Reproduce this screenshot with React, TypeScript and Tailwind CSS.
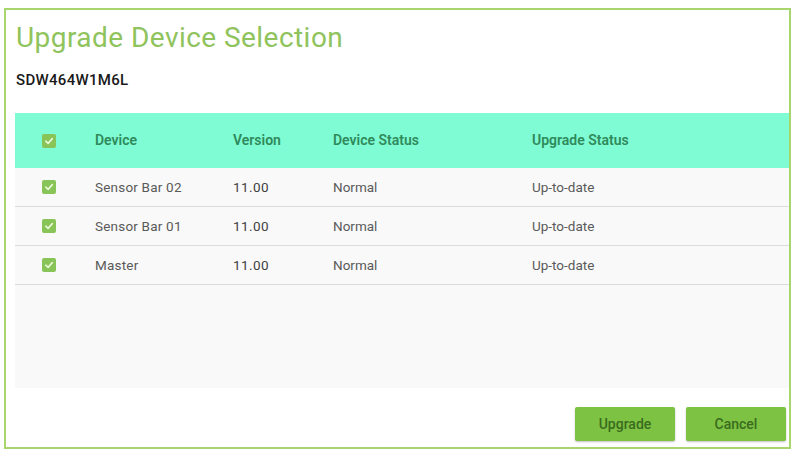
import React from "react";

type Row = { device: string; version: string; status: string; upgrade: string };

const rows: Row[] = [
  { device: "Sensor Bar 02", version: "11.00", status: "Normal", upgrade: "Up-to-date" },
  { device: "Sensor Bar 01", version: "11.00", status: "Normal", upgrade: "Up-to-date" },
  { device: "Master", version: "11.00", status: "Normal", upgrade: "Up-to-date" },
];

function Check() {
  return (
    <span className="flex h-[14px] w-[14px] items-center justify-center rounded-[2px] bg-[#88c457]">
      <svg width="10" height="10" viewBox="0 0 10 10" fill="none">
        <path d="M1.8 5.2 L4.1 7.4 L8.3 2.6" stroke="#eaf7d8" strokeWidth="1.6" strokeLinecap="round" strokeLinejoin="round" />
      </svg>
    </span>
  );
}

const cols = "grid grid-cols-[80px_138px_100px_199px_1fr] items-center";

export default function App() {
  return (
    <div
      className="h-[450px] w-[793px] bg-white pl-[4px] pt-[8px]"
      style={{ fontFamily: "Roboto, 'Liberation Sans', sans-serif" }}
    >
      <div className="flex h-[441px] w-[787px] flex-col border-2 border-[#a8d56d] bg-white">
        <h1 className="pl-[10px] pt-[11px] text-[28px] leading-[33px] font-normal tracking-[0.45px] text-[#8fc35c]">
          Upgrade Device Selection
        </h1>
        <div className="mt-[16px] pl-[10px] text-[15px] leading-[20px] font-medium tracking-[0.3px] text-[#1a1a1a]">
          SDW464W1M6L
        </div>

        <div className="ml-[9px] mt-[23px] flex h-[275px] flex-col bg-[#f9f9f9]">
          <div className={`${cols} h-[55px] bg-[#7ffcd3] text-[14px] font-semibold text-[#2f8a5c]`}>
            <div className="pl-[27px]">
              <Check />
            </div>
            <div>Device</div>
            <div>Version</div>
            <div>Device Status</div>
            <div>Upgrade Status</div>
          </div>
          {rows.map((r) => (
            <div
              key={r.device}
              className={`${cols} h-[39px] border-b border-[#dcdcdc] text-[13.5px] text-[#5a5a5a]`}
            >
              <div className="pl-[27px]">
                <Check />
              </div>
              <div className="tracking-[0.2px]">{r.device}</div>
              <div className="tracking-[0.4px] text-[#3f3f3f]">{r.version}</div>
              <div>{r.status}</div>
              <div>{r.upgrade}</div>
            </div>
          ))}
        </div>

        <div className="mt-[19px] flex justify-end gap-[11px] pr-[3px]">
          <button className="h-[34px] w-[100px] rounded-[2px] bg-[#7dc243] text-[14px] font-medium text-[#3a6c1e] shadow-[0_1px_2px_rgba(0,0,0,0.25)]">
            Upgrade
          </button>
          <button className="h-[34px] w-[100px] rounded-[2px] bg-[#7dc243] text-[14px] font-medium text-[#3a6c1e] shadow-[0_1px_2px_rgba(0,0,0,0.25)]">
            Cancel
          </button>
        </div>
      </div>
    </div>
  );
}
